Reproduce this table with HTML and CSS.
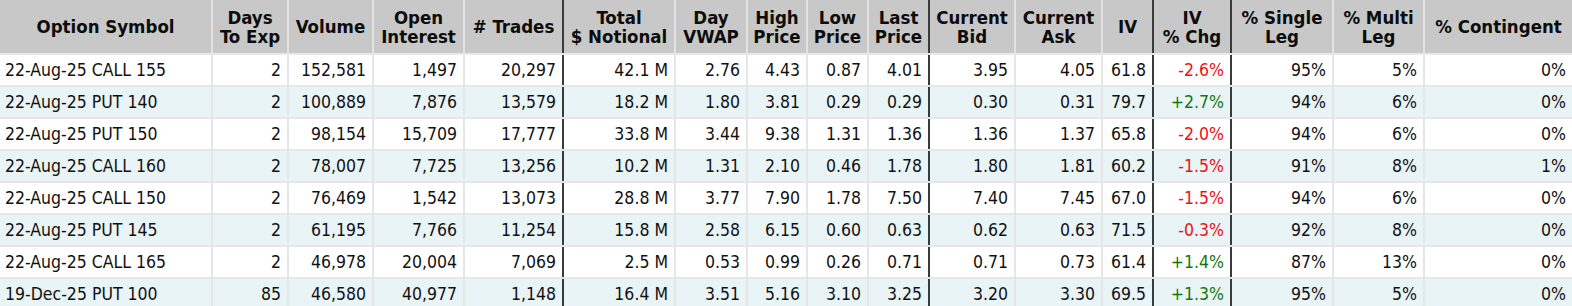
FILE: index.html
```html
<!DOCTYPE html>
<html>
<head>
<meta charset="utf-8">
<link rel="stylesheet" href="styles.css">
</head>
<body>
<table class="grid">
  <colgroup>
    <col class="c-sym"><col class="c-days"><col class="c-vol"><col class="c-oi"><col class="c-trd">
    <col class="c-not"><col class="c-vwap"><col class="c-hi"><col class="c-lo"><col class="c-last">
    <col class="c-bid"><col class="c-ask"><col class="c-iv"><col class="c-ivc"><col class="c-single">
    <col class="c-multi"><col class="c-cont">
  </colgroup>
  <thead>
    <tr>
      <th>Option Symbol</th>
      <th>Days<br>To Exp</th>
      <th>Volume</th>
      <th>Open<br>Interest</th>
      <th class="sep"># Trades</th>
      <th>Total<br>$ Notional</th>
      <th>Day<br>VWAP</th>
      <th>High<br>Price</th>
      <th>Low<br>Price</th>
      <th class="sep">Last<br>Price</th>
      <th>Current<br>Bid</th>
      <th>Current<br>Ask</th>
      <th class="sep">IV</th>
      <th class="sep">IV<br>% Chg</th>
      <th>% Single<br>Leg</th>
      <th>% Multi<br>Leg</th>
      <th>% Contingent</th>
    </tr>
  </thead>
  <tbody>
    <tr><td class="l">22-Aug-25 CALL 155</td><td>2</td><td>152,581</td><td>1,497</td><td class="sep">20,297</td><td>42.1 M</td><td>2.76</td><td>4.43</td><td>0.87</td><td class="sep">4.01</td><td>3.95</td><td>4.05</td><td class="sep">61.8</td><td class="sep neg">-2.6%</td><td>95%</td><td>5%</td><td>0%</td></tr>
    <tr><td class="l">22-Aug-25 PUT 140</td><td>2</td><td>100,889</td><td>7,876</td><td class="sep">13,579</td><td>18.2 M</td><td>1.80</td><td>3.81</td><td>0.29</td><td class="sep">0.29</td><td>0.30</td><td>0.31</td><td class="sep">79.7</td><td class="sep pos">+2.7%</td><td>94%</td><td>6%</td><td>0%</td></tr>
    <tr><td class="l">22-Aug-25 PUT 150</td><td>2</td><td>98,154</td><td>15,709</td><td class="sep">17,777</td><td>33.8 M</td><td>3.44</td><td>9.38</td><td>1.31</td><td class="sep">1.36</td><td>1.36</td><td>1.37</td><td class="sep">65.8</td><td class="sep neg">-2.0%</td><td>94%</td><td>6%</td><td>0%</td></tr>
    <tr><td class="l">22-Aug-25 CALL 160</td><td>2</td><td>78,007</td><td>7,725</td><td class="sep">13,256</td><td>10.2 M</td><td>1.31</td><td>2.10</td><td>0.46</td><td class="sep">1.78</td><td>1.80</td><td>1.81</td><td class="sep">60.2</td><td class="sep neg">-1.5%</td><td>91%</td><td>8%</td><td>1%</td></tr>
    <tr><td class="l">22-Aug-25 CALL 150</td><td>2</td><td>76,469</td><td>1,542</td><td class="sep">13,073</td><td>28.8 M</td><td>3.77</td><td>7.90</td><td>1.78</td><td class="sep">7.50</td><td>7.40</td><td>7.45</td><td class="sep">67.0</td><td class="sep neg">-1.5%</td><td>94%</td><td>6%</td><td>0%</td></tr>
    <tr><td class="l">22-Aug-25 PUT 145</td><td>2</td><td>61,195</td><td>7,766</td><td class="sep">11,254</td><td>15.8 M</td><td>2.58</td><td>6.15</td><td>0.60</td><td class="sep">0.63</td><td>0.62</td><td>0.63</td><td class="sep">71.5</td><td class="sep neg">-0.3%</td><td>92%</td><td>8%</td><td>0%</td></tr>
    <tr><td class="l">22-Aug-25 CALL 165</td><td>2</td><td>46,978</td><td>20,004</td><td class="sep">7,069</td><td>2.5 M</td><td>0.53</td><td>0.99</td><td>0.26</td><td class="sep">0.71</td><td>0.71</td><td>0.73</td><td class="sep">61.4</td><td class="sep pos">+1.4%</td><td>87%</td><td>13%</td><td>0%</td></tr>
    <tr><td class="l">19-Dec-25 PUT 100</td><td>85</td><td>46,580</td><td>40,977</td><td class="sep">1,148</td><td>16.4 M</td><td>3.51</td><td>5.16</td><td>3.10</td><td class="sep">3.25</td><td>3.20</td><td>3.30</td><td class="sep">69.5</td><td class="sep pos">+1.3%</td><td>95%</td><td>5%</td><td>0%</td></tr>
  </tbody>
</table>
</body>
</html>
```

FILE: styles.css
```css
html, body {
  margin: 0;
  padding: 0;
  background: #ffffff;
}

.grid {
  border-collapse: collapse;
  table-layout: fixed;
  width: 1572px;
  font-family: "DejaVu Sans Condensed", "DejaVu Sans", sans-serif;
  font-size: 17.5px;
  color: #111;
}

.c-sym { width: 212px; }
.c-days { width: 76px; }
.c-vol { width: 85px; }
.c-oi { width: 91px; }
.c-trd { width: 99px; }
.c-not { width: 112px; }
.c-vwap { width: 72px; }
.c-hi { width: 60px; }
.c-lo { width: 61px; }
.c-last { width: 61px; }
.c-bid { width: 86px; }
.c-ask { width: 87px; }
.c-iv { width: 51px; }
.c-ivc { width: 78px; }
.c-single { width: 102px; }
.c-multi { width: 91px; }
.c-cont { width: 148px; }

.grid th {
  background: #c8c8c8;
  font-weight: bold;
  font-size: 18.5px;
  text-align: center;
  vertical-align: middle;
  height: 53px;
  padding: 0 2px;
  line-height: 19px;
  border-left: 2px solid #e2e2e2;
  border-right: 2px solid #e2e2e2;
  border-bottom: 2px solid #e8e8e8;
  border-top: 0;
  white-space: nowrap;
  color: #0c0c0c;
}

.grid td {
  text-align: right;
  height: 30px;
  padding: 0 6px 0 4px;
  border: 2px solid #e6e6e6;
  white-space: nowrap;
  vertical-align: middle;
}

.grid th:first-child, .grid td:first-child { border-left: 0; }
.grid th:last-child, .grid td:last-child { border-right: 0; }

.grid td.l {
  text-align: left;
  padding-left: 5px;
}

.grid .sep {
  border-right: 2px solid #3a3a3a;
}

.grid tbody tr:nth-child(even) td {
  background: #e9f4f6;
}

.neg { color: #ee1111; }
.pos { color: #117711; }
```
